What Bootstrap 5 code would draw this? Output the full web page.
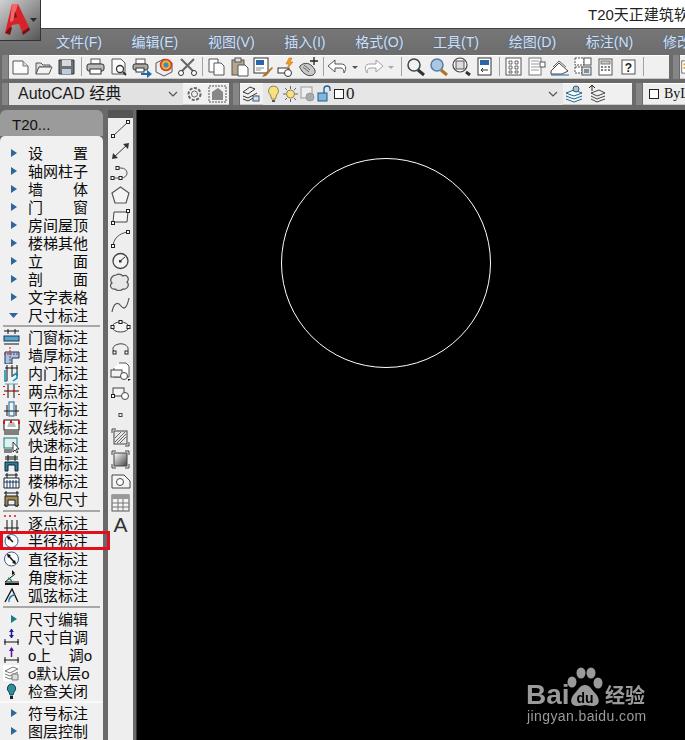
<!DOCTYPE html>
<html lang="zh">
<head>
<meta charset="utf-8">
<title>T20天正建筑软件</title>
<link href="https://cdn.jsdelivr.net/npm/bootstrap@5.3.0/dist/css/bootstrap.min.css" rel="stylesheet">
<style>
html,body{margin:0;height:740px;overflow:hidden;background:#696969}
body{font-family:"Liberation Sans","Noto Sans CJK SC",sans-serif;color:#111}
svg{display:block;flex:none}
.app{position:relative;width:685px;height:740px;overflow:hidden}
.logo-box{position:absolute;left:0;top:0;width:41px;height:41px;background:linear-gradient(140deg,#d2d2d2,#8c8c8c 55%,#565656);border-right:1px solid #333;border-bottom:1px solid #333}
.title-strip{height:29px;background:#fff;border-bottom:1px solid #444;padding-left:588px;font-size:15px;line-height:29px;white-space:nowrap;overflow:hidden;color:#222}
.menu-strip{height:26px;background:linear-gradient(#777,#6c6c6c);padding-left:56px;gap:29.7px;font-size:14px;line-height:26px;color:#d6dee9;white-space:nowrap;overflow:hidden;text-shadow:0 0 2px #3d6ea5}
.tool-row{background:#6b6b6b;white-space:nowrap;overflow:hidden}
.row-one{height:24px;padding-left:2px}
.row-two{height:22px;margin-top:4px;padding-left:2px}
.grip{width:6px;height:100%;flex:none;margin-right:1px;background-color:#868686;background-image:radial-gradient(#1d1d1d 45%,transparent 50%);background-size:2px 2px}
.tool-panel{background:#f0f0f0;height:100%;flex:none;box-shadow:inset 0 1px 0 #fff,inset 0 -1px 0 #c9c9c9}
.ti{width:23px;height:100%;flex:none}
.ti-n{width:13px;height:100%;flex:none}
.tsep{width:6px;height:100%;flex:none}
.tsep::after{content:"";display:block;width:1px;height:19px;margin:2px auto 0;background:#a3a3a3}
.combo{background:#e2e2e2;height:100%;font-size:16px;line-height:22px;color:#1a1a1a;flex:none}
.combo-style{width:174px;padding-left:9px}
.combo-layer{width:300px;padding-left:2px;background:#e6e6e6}
.zero{font-family:"Liberation Serif",serif;font-size:17px;margin-left:1px;line-height:22px}
.end-gap{width:23px;flex:none}
.bylayer{font-family:"Liberation Serif",serif;font-size:14px;line-height:22px;padding-left:5px;width:60px;background:#eee}
.main-zone{height:630px;margin-top:5px;background:#696969}
.palette{width:103px;flex:none}
.pal-head{height:26px;background:#9b9b9b;border-radius:6px 6px 0 0;padding-left:12px;font-size:15px;line-height:29px;position:relative;color:#111}
.head-grip{position:absolute;left:4px;top:7px;width:3px;height:9px;background-image:radial-gradient(#222 45%,transparent 50%);background-size:2px 2px}
.pal-body{background:#f0f0f0;border-radius:5px 5px 0 0;padding-top:8px;height:604px}
.pal-row{height:18px;padding-left:3px;font-size:15px;line-height:18px;color:#0c0c0c}
.pal-row .pi{width:17px;height:18px;flex:none;margin-right:8px}
.pal-label{width:60px;flex:none;white-space:nowrap;padding-top:1px}
.pal-wide{width:64px}
.pal-sep{height:2px;margin:1px 3px;background:#a8a8a8}
.pal-sep-w{margin:2px 3px}
.pal-sep-l{background:#fafafa;margin:1px 0}
.vbar{width:25px;flex:none;margin-left:5px;background:#eee;height:630px}
.vgrip{height:8px;padding:2px 4px;background:#555}
.vdots{height:4px;background-image:radial-gradient(#111 45%,transparent 50%);background-size:2px 2px}
.vi{height:22px}
.vbar-a{font-size:21px;line-height:22px;text-align:center;color:#333}
.canvas-view{position:relative;width:549px;margin-left:3px;height:630px;background:#000;flex:none;border-left:1px solid #333}
.circle-art{position:absolute;left:143px;top:47px}
.marker{position:absolute;left:0;top:531px;width:110px;height:19px;border:3px solid #e40f1c}
.wm{position:absolute;left:525px;top:680px;width:150px;color:#9a9a9a;filter:blur(.3px)}
.wm-bai{position:absolute;left:1px;top:0;font:700 28px/30px "Liberation Sans",sans-serif}
.wm-jing{position:absolute;left:80px;top:3px;font-size:20px;line-height:26px;font-weight:700;white-space:nowrap}
.wm-url{position:absolute;left:2px;top:27px;font:14px/18px "Liberation Sans",sans-serif;letter-spacing:.4px;white-space:nowrap}
.wm-paw{position:absolute;left:27px;top:-18px}
</style>
</head>
<body>
<svg width="0" height="0" style="position:absolute">
<defs>
<symbol id="arR" viewBox="0 0 17 18"><path d="M8 5l6 4-6 4z" fill="#2f659c"/></symbol>
<symbol id="arT" viewBox="0 0 17 18"><path d="M8 5l6 4-6 4z" fill="#128080"/></symbol>
<symbol id="arD" viewBox="0 0 17 18"><path d="M6 7h9l-4.500 5z" fill="#2f659c"/></symbol>
<symbol id="dimA" viewBox="0 0 17 18"><path d="M1 3h15M1 16h15" stroke="#111"/><path d="M5 1v5M12 1v5" stroke="#111"/><rect x="1" y="8" width="15" height="5" fill="#58a6c8" stroke="#16355c"/></symbol>
<symbol id="dimB" viewBox="0 0 17 18"><path d="M2 6h14v6H9v6H2z" fill="#9cc8ea" stroke="#16355c"/><path d="M7 1v16M1 8h15" stroke="#e01010" stroke-dasharray="2 1"/></symbol>
<symbol id="dimC" viewBox="0 0 17 18"><path d="M2 4h13M4 1v16M9 1v12M14 1v11" stroke="#111"/><path d="M2 6v11h2M9 12l5-3v5l-4 3" fill="none" stroke="#1487a8" stroke-width="1.500"/></symbol>
<symbol id="dimD" viewBox="0 0 17 18"><path d="M1 9h15M5 2v14M11 2v14" stroke="#111"/><path d="M1 4v1M16 4v1M1 12v1M16 12v1M5 8v2M11 8v2" stroke="#e01010" stroke-width="2"/><path d="M2 2h13" stroke="#58a6c8"/></symbol>
<symbol id="dimE" viewBox="0 0 17 18"><path d="M1 11h15M4 5v11M13 5v11" stroke="#111"/><rect x="6" y="2" width="5" height="14" fill="none" stroke="#1a5f92"/></symbol>
<symbol id="dimF" viewBox="0 0 17 18"><rect x="1" y="2" width="15" height="10" fill="#fff" stroke="#111"/><path d="M4 9l2-5h5l2 5z" fill="#bbb"/><path d="M1 3v3M16 3v3M8 2v3" stroke="#e01010" stroke-width="2"/><path d="M1 14h15M1 16h15" stroke="#111"/></symbol>
<symbol id="dimG" viewBox="0 0 17 18"><rect x="1" y="2" width="13" height="10" fill="#dff1ef" stroke="#127a72"/><path d="M10 6v10l2-2 2 3 1-1-2-3h3z" fill="#fff" stroke="#111" stroke-width=".8"/><path d="M1 14h8M1 16h8" stroke="#111"/></symbol>
<symbol id="dimH" viewBox="0 0 17 18"><path d="M2 3h13M5 1v6M12 1v6" stroke="#111"/><path d="M2 5h13" stroke="#111"/><path d="M2 17V8h13v9h-3v-6H5v6z" fill="#2c7f8c" stroke="#124"/></symbol>
<symbol id="dimI" viewBox="0 0 17 18"><path d="M2 3h13M4 1v5M13 1v5" stroke="#111"/><path d="M1 6h15v10H1z" fill="#fff" stroke="#123"/><path d="M4 8v8M7 8v8M10 8v8M13 8v8" stroke="#14355e"/><path d="M1 10h15" stroke="#14355e"/></symbol>
<symbol id="dimJ" viewBox="0 0 17 18"><path d="M1 3h15M3 1v16M14 1v16M1 15h15" stroke="#111"/><path d="M2 6h13v10h-3v-6H5v6H2z" fill="#a8894a" stroke="#123"/></symbol>
<symbol id="dimK" viewBox="0 0 17 18"><path d="M2 1v2M7 1v2M12 1v2" stroke="#e01010" stroke-width="1.500"/><path d="M1 14h15M4 6v11M9 6v11M14 6v11" stroke="#111"/></symbol>
<symbol id="cirA" viewBox="0 0 17 18"><circle cx="8.500" cy="9" r="6.500" fill="#fff" stroke="#2f5d8f"/><path d="M5 5l5 5" stroke="#111" stroke-width="1.500"/><path d="M4 4l4 1-3 3z" fill="#111"/></symbol>
<symbol id="cirB" viewBox="0 0 17 18"><circle cx="8.500" cy="9" r="7" fill="#fff" stroke="#2f5d8f"/><path d="M5 5l7 8" stroke="#111" stroke-width="1.500"/><path d="M4 4l4 1-3 3zM13 14l-4-1 3-3z" fill="#111"/></symbol>
<symbol id="angA" viewBox="0 0 17 18"><path d="M2 14L12 6M2 14h14" stroke="#111"/><path d="M2 16h14" stroke="#111" stroke-width="2"/><path d="M5 10a6 6 0 0 1 4 4" fill="none" stroke="#1a8a70" stroke-width="1.500"/><path d="M9 2l3 3-3 2z" fill="#111"/></symbol>
<symbol id="angB" viewBox="0 0 17 18"><path d="M2 16L9 3l6 13" fill="none" stroke="#111" stroke-width="1.300"/><path d="M6 16a6 6 0 0 1 6-7" fill="none" stroke="#1a73b0" stroke-width="1.500"/></symbol>
<symbol id="adjA" viewBox="0 0 17 18"><path d="M1 14h15M2 11v6M15 11v6" stroke="#111"/><path d="M8.500 1v9" stroke="#1c1c9c" stroke-width="1.500"/><path d="M6 4l2.500-3L11 4zM6 7l2.500 3L11 7z" fill="#1c1c9c"/></symbol>
<symbol id="adjB" viewBox="0 0 17 18"><path d="M1 14h15M2 11v6M15 11v6" stroke="#111"/><path d="M8.500 2v9" stroke="#5a0f9c" stroke-width="1.500"/><path d="M6 5l2.500-4L11 5z" fill="#5a0f9c"/></symbol>
<symbol id="layA" viewBox="0 0 17 18"><rect width="16" height="16" x="0" y="1" fill="#fff"/><path d="M2 7l8-4 5 2-8 4zM2 10l5 2 8-4M2 13l5 2 8-4" fill="none" stroke="#777"/><path d="M9 10h6v6H9z" fill="#ddd" stroke="#777"/></symbol>
<symbol id="bulbT" viewBox="0 0 17 18"><path d="M8.500 2a4.500 4.500 0 0 0-2.500 8l1 3h3l1-3a4.500 4.500 0 0 0-2.500-8z" fill="#2f8f92" stroke="#103f63"/><path d="M7 14h3v3H7z" fill="#123"/></symbol>
<symbol id="vLine" viewBox="0 0 25 22"><path d="M5 18L20 4" stroke="#444"/><rect x="3.500" y="16.500" width="3" height="3" fill="#fff" stroke="#222"/><rect x="18.500" y="2.500" width="3" height="3" fill="#fff" stroke="#222"/></symbol>
<symbol id="vLine2" viewBox="0 0 25 22"><path d="M5 18L20 4" stroke="#333"/><path d="M4 19l1-6 5 5zM21 3l-1 6-5-5z" fill="#333"/></symbol>
<symbol id="vPline" viewBox="0 0 25 22"><path d="M5 16h8c8 0 8-10 0-10H9" fill="none" stroke="#555"/><rect x="3" y="14.500" width="3" height="3" fill="#fff" stroke="#222"/><rect x="11" y="14.500" width="3" height="3" fill="#fff" stroke="#222"/><rect x="8" y="4.500" width="3" height="3" fill="#fff" stroke="#222"/></symbol>
<symbol id="vPoly" viewBox="0 0 25 22"><path d="M12.500 3L21 9l-3 10H7L4 9z" fill="#f4f4f4" stroke="#555" stroke-width="1.200"/></symbol>
<symbol id="vRect" viewBox="0 0 25 22"><path d="M6 6h14l-1 10H5z" fill="#f4f4f4" stroke="#444"/><rect x="18.500" y="3.500" width="3" height="3" fill="#fff" stroke="#222"/><rect x="3.500" y="15.500" width="3" height="3" fill="#fff" stroke="#222"/></symbol>
<symbol id="vArc" viewBox="0 0 25 22"><path d="M5 19C5 11 11 5 20 4" fill="none" stroke="#555"/><rect x="3.500" y="16.500" width="3" height="3" fill="#fff" stroke="#222"/><rect x="18.500" y="2.500" width="3" height="3" fill="#fff" stroke="#222"/></symbol>
<symbol id="vCir" viewBox="0 0 25 22"><circle cx="12.500" cy="11" r="7.500" fill="#f4f4f4" stroke="#444" stroke-width="1.300"/><path d="M12 11l5-4" stroke="#333"/><rect x="11" y="10" width="2.500" height="2.500" fill="#333"/></symbol>
<symbol id="vCloud" viewBox="0 0 25 22"><path d="M8 3c3-2 6 0 7 1 4-2 7 3 4 6 3 3 0 8-4 7-2 2-6 2-8 0-4 1-6-4-3-6-3-3 0-8 4-8z" fill="#e8e8e8" stroke="#555" stroke-width="1.200"/></symbol>
<symbol id="vSpl" viewBox="0 0 25 22"><path d="M4 18C6 8 10 8 13 12s6 2 8-8" fill="none" stroke="#555" stroke-width="1.200"/></symbol>
<symbol id="vEll" viewBox="0 0 25 22"><ellipse cx="12.500" cy="11" rx="8.500" ry="5" fill="#f4f4f4" stroke="#444"/><rect x="11" y="4.500" width="3" height="3" fill="#fff" stroke="#222"/><rect x="3" y="9.500" width="3" height="3" fill="#fff" stroke="#222"/><rect x="19" y="9.500" width="3" height="3" fill="#fff" stroke="#222"/></symbol>
<symbol id="vEllA" viewBox="0 0 25 22"><path d="M6 14C2 8 10 5 15 6s7 6 3 9" fill="none" stroke="#444"/><rect x="5" y="13" width="3" height="3" fill="#fff" stroke="#222"/><rect x="17" y="13" width="3" height="3" fill="#fff" stroke="#222"/></symbol>
<symbol id="vIns" viewBox="0 0 25 22"><path d="M11 3h7l3 3v11H6V8" fill="#fff" stroke="#555"/><rect x="3" y="10" width="11" height="7" fill="#f4f4f4" stroke="#444"/><circle cx="16" cy="16" r="3.500" fill="#fff" stroke="#444"/><path d="M20 19l3 0-3 2z" fill="#111"/></symbol>
<symbol id="vBlk" viewBox="0 0 25 22"><rect x="5" y="6" width="11" height="8" fill="#f4f4f4" stroke="#444"/><circle cx="17" cy="14" r="3.500" fill="#fff" stroke="#444"/><rect x="3.500" y="12.500" width="3" height="3" fill="#fff" stroke="#222"/></symbol>
<symbol id="vPt" viewBox="0 0 25 22"><rect x="11" y="9.500" width="3" height="3" fill="#fff" stroke="#444"/></symbol>
<symbol id="vHat" viewBox="0 0 25 22"><rect x="6" y="5" width="13" height="13" fill="#e8e8e8" stroke="#444"/><path d="M7 16L17 6M9 17L18 8M7 12l6-6M12 17l6-6" stroke="#666"/><path d="M4 7V3h4M21 16v4h-4" fill="none" stroke="#444"/></symbol>
<symbol id="vGrad" viewBox="0 0 25 22"><defs><linearGradient id="gr1" x1="0" y1="0" x2="1" y2="1"><stop offset="0" stop-color="#fff"/><stop offset="1" stop-color="#444"/></linearGradient></defs><rect x="6" y="5" width="13" height="13" fill="url(#gr1)" stroke="#444"/><path d="M4 7V3h4M21 7V3h-4M4 16v4h4M21 16v4h-4" fill="none" stroke="#444"/></symbol>
<symbol id="vBnd" viewBox="0 0 25 22"><path d="M4 5h12l6 6v7H4z" fill="#f4f4f4" stroke="#444"/><circle cx="12" cy="12" r="3.500" fill="#fff" stroke="#444"/></symbol>
<symbol id="vTab" viewBox="0 0 25 22"><rect x="4" y="3" width="17" height="16" fill="#f4f4f4" stroke="#555"/><path d="M4 3h17v4H4z" fill="#999"/><path d="M4 11h17M4 15h17M10 7v12M15 7v12" stroke="#777"/></symbol>
<symbol id="tNew" viewBox="0 0 23 24"><path d="M4 6h10l5 5v8H4z" fill="#fbfbfb" stroke="#555"/><path d="M14 6v5h5" fill="#ddd" stroke="#777"/></symbol>
<symbol id="tOpen" viewBox="0 0 23 24"><path d="M4 8h5l2 2h7v2H7l-3 7z" fill="#ddd" stroke="#555"/><path d="M7 12h13l-3 7H4z" fill="#f3f3f3" stroke="#555"/></symbol>
<symbol id="tSave" viewBox="0 0 23 24"><path d="M4 5h15v14H4z" fill="#6d7178" stroke="#33373e"/><rect x="7" y="5" width="9" height="6" fill="#d8d8d8"/><rect x="7" y="14" width="9" height="5" fill="#bcd"/></symbol>
<symbol id="tPrint" viewBox="0 0 23 24"><rect x="7" y="4" width="9" height="5" fill="#fff" stroke="#555"/><rect x="3" y="9" width="17" height="7" rx="2" fill="#bbb" stroke="#333"/><rect x="6" y="14" width="11" height="5" fill="#fff" stroke="#333"/></symbol>
<symbol id="tPrev" viewBox="0 0 23 24"><path d="M5 4h9l4 4v11H5z" fill="#fbfbfb" stroke="#555"/><circle cx="13" cy="14" r="3.500" fill="#fff" stroke="#333" stroke-width="1.300"/><path d="M16 17l3 3" stroke="#333" stroke-width="2"/></symbol>
<symbol id="tPub" viewBox="0 0 23 24"><rect x="6" y="4" width="9" height="5" fill="#fff" stroke="#555"/><rect x="3" y="9" width="15" height="6" rx="2" fill="#aaa" stroke="#333"/><rect x="6" y="13" width="8" height="4" fill="#fff" stroke="#333"/><path d="M11 18h6v-3l5 4-5 4v-3h-6z" fill="#1f68b3"/></symbol>
<symbol id="t3d" viewBox="0 0 23 24"><path d="M3 8l8-4 8 4v9l-8 4-8-4z" fill="#eee" stroke="#555"/><circle cx="13" cy="10" r="5.500" fill="#e7b23a" stroke="#d63a1e" stroke-width="1.500"/><circle cx="13" cy="10" r="2.500" fill="#3a8ac9"/></symbol>
<symbol id="tCut" viewBox="0 0 23 24"><path d="M5 4l13 13M18 4L5 17" stroke="#666" stroke-width="2"/><circle cx="5" cy="18" r="2.500" fill="#fff" stroke="#333"/><circle cx="18" cy="18" r="2.500" fill="#fff" stroke="#333"/></symbol>
<symbol id="tCopy" viewBox="0 0 23 24"><path d="M4 4h9v13H4z" fill="#fff" stroke="#555"/><path d="M9 8h7l3 3v9H9z" fill="#fff" stroke="#555"/></symbol>
<symbol id="tPaste" viewBox="0 0 23 24"><rect x="4" y="5" width="12" height="15" fill="#b5a78c" stroke="#555"/><rect x="7" y="3" width="6" height="4" fill="#ddd" stroke="#555"/><path d="M10 10h7l3 3v8H10z" fill="#fff" stroke="#555"/></symbol>
<symbol id="tMatch" viewBox="0 0 23 24"><rect x="3" y="3" width="14" height="15" fill="#fff" stroke="#333"/><rect x="5" y="5" width="8" height="5" fill="#2a65a8"/><path d="M5 13h8M5 15h5" stroke="#888"/><path d="M21 12l-8 7-2 3 4-1 7-8z" fill="#b07327"/></symbol>
<symbol id="tBlk" viewBox="0 0 23 24"><rect x="4" y="13" width="11" height="5" fill="#fff" stroke="#333"/><circle cx="14" cy="18" r="3.500" fill="#fff" stroke="#333"/><path d="M15 3l-3 6h3l-2 5 6-7h-3l2-4z" fill="#f0a020" stroke="#c06010" stroke-width=".5"/></symbol>
<symbol id="tHand" viewBox="0 0 23 24"><path d="M3 11c3-3 8-4 12 0s4 7 1 9c-4 2-9-1-11-4-1-2-3-3-2-5z" fill="#c8c8c8" stroke="#444"/><path d="M6 12l6 5M7 10l6 5" stroke="#666"/><path d="M17 2v8M13 6h8" stroke="#222" stroke-width="1.300"/></symbol>
<symbol id="tUndo" viewBox="0 0 23 24"><path d="M9 5L2 11l7 6v-4h6c2 0 3 2 3 5 3-5 2-9-3-9H9z" fill="#fff" stroke="#555"/></symbol>
<symbol id="tRedo" viewBox="0 0 23 24"><path d="M14 5l7 6-7 6v-4H8c-2 0-3 2-3 5-3-5-2-9 3-9h6z" fill="#fff" stroke="#a0a0a0"/></symbol>
<symbol id="tDrop" viewBox="0 0 13 24"><path d="M3 11h6l-3 3z" fill="#555"/></symbol>
<symbol id="tDropL" viewBox="0 0 13 24"><path d="M3 11h6l-3 3z" fill="#aaa"/></symbol>
<symbol id="tZ1" viewBox="0 0 23 24"><circle cx="10" cy="10" r="6" fill="#eef3f7" stroke="#444" stroke-width="1.500"/><path d="M14 15l6 5" stroke="#333" stroke-width="3"/></symbol>
<symbol id="tZ2" viewBox="0 0 23 24"><circle cx="10" cy="10" r="6" fill="#a9c8e6" stroke="#5a7ca0" stroke-width="1.500"/><path d="M14 15l6 5" stroke="#b07327" stroke-width="3"/></symbol>
<symbol id="tZ3" viewBox="0 0 23 24"><circle cx="10" cy="10" r="7" fill="#fff" stroke="#444" stroke-width="1.200"/><rect x="6" y="6" width="8" height="8" fill="#ddd" stroke="#555"/><path d="M16 17l4 3" stroke="#333" stroke-width="3"/></symbol>
<symbol id="tProp" viewBox="0 0 23 24"><rect x="5" y="3" width="13" height="17" fill="#fff" stroke="#333"/><rect x="7" y="5" width="9" height="5" fill="#2a65a8"/><path d="M8 15h7M8 15l2-2M8 15l2 2" stroke="#333"/></symbol>
<symbol id="tTool" viewBox="0 0 23 24"><rect x="4" y="3" width="15" height="17" fill="#fff" stroke="#555"/><path d="M7 6h3v3H7zM13 6h3v3h-3zM7 11h3v3H7zM13 11h3v3h-3zM7 16h3v2H7zM13 16h3v2h-3z" fill="#fff" stroke="#444" stroke-width=".8"/></symbol>
<symbol id="tDes" viewBox="0 0 23 24"><rect x="4" y="3" width="12" height="17" fill="#fff" stroke="#777"/><path d="M6 6h8M6 9h8M6 12h8M6 15h8" stroke="#999"/><rect x="15" y="7" width="5" height="5" fill="#fff" stroke="#555"/></symbol>
<symbol id="tSheet" viewBox="0 0 23 24"><path d="M3 16l8-8 9 8-6 3H3z" fill="#fff" stroke="#444"/><path d="M5 12l6-6 7 6" fill="none" stroke="#666"/><path d="M3 20h18" stroke="#2a65a8"/></symbol>
<symbol id="tMark" viewBox="0 0 23 24"><rect x="4" y="3" width="9" height="7" fill="#fff" stroke="#555" stroke-dasharray="2 1"/><rect x="13" y="3" width="7" height="7" fill="#fff" stroke="#555"/><rect x="4" y="12" width="7" height="6" fill="#fff" stroke="#555" stroke-dasharray="2 1"/><rect x="11" y="12" width="9" height="8" fill="#dde7f1" stroke="#555"/><path d="M13 15h5M13 17h5" stroke="#333"/></symbol>
<symbol id="tCalc" viewBox="0 0 23 24"><rect x="5" y="4" width="13" height="16" fill="#fff" stroke="#555"/><rect x="7" y="6" width="9" height="3" fill="#ccc" stroke="#777"/><path d="M7 12h2M10.500 12h2M14 12h2M7 15h2M10.500 15h2M14 15h2" stroke="#555" stroke-width="1.500"/></symbol>
<symbol id="tSett" viewBox="0 0 23 22"><circle cx="11.500" cy="11" r="6" fill="none" stroke="#666" stroke-width="2" stroke-dasharray="3 1.500"/><circle cx="11.500" cy="11" r="3" fill="#eee" stroke="#666"/></symbol>
<symbol id="tWs" viewBox="0 0 23 22"><rect x="3" y="3" width="17" height="16" fill="none" stroke="#555" stroke-dasharray="2 1"/><path d="M6 17V9l6-4 5 4v8z" fill="#888"/></symbol>
<symbol id="lLay" viewBox="0 0 23 22"><path d="M3 9l7-5 5 2-7 5zM3 13l5 2 9-5M3 16l5 2 9-5" fill="none" stroke="#333"/><rect x="13" y="13" width="6" height="5" fill="#cfe0ef" stroke="#456"/></symbol>
<symbol id="lBulb" viewBox="0 0 17 22"><path d="M8.500 3a5 5 0 0 0-3 9l1 4h4l1-4a5 5 0 0 0-3-9z" fill="#f9e27d" stroke="#8d8155"/><path d="M7 17h3v2H7z" fill="#555"/></symbol>
<symbol id="lSun" viewBox="0 0 17 22"><circle cx="8.500" cy="11" r="4" fill="#f9e27d" stroke="#8d8155"/><path d="M8.500 3v3M8.500 16v3M1 11h3M13 11h3M3 5l2 2M12 15l2 2M14 5l-2 2M5 15l-2 2" stroke="#666"/></symbol>
<symbol id="lFrz" viewBox="0 0 17 22"><rect x="2" y="4" width="11" height="11" fill="#eee" stroke="#999"/><circle cx="11" cy="14" r="4" fill="#aaa" stroke="#999"/></symbol>
<symbol id="lLock" viewBox="0 0 17 22"><rect x="2" y="10" width="9" height="8" fill="#7fb6dc" stroke="#1e5c90"/><path d="M8 10V6a3 3 0 0 1 6 0v2" fill="none" stroke="#1e5c90" stroke-width="1.300"/></symbol>
<symbol id="lSq" viewBox="0 0 12 22"><rect x="1.500" y="6.500" width="9" height="9" fill="#fff" stroke="#222"/></symbol>
<symbol id="lChev" viewBox="0 0 12 22"><path d="M2 9l4 4 4-4" fill="none" stroke="#555" stroke-width="1.200"/></symbol>
<symbol id="lL2" viewBox="0 0 23 22"><path d="M3 10l8-3 8 3-8 3zM3 13l8 3 8-3M3 16l8 3 8-3" fill="#fff" stroke="#16688f"/><circle cx="13" cy="6" r="3" fill="#9fc4e0" stroke="#456"/></symbol>
<symbol id="lL3" viewBox="0 0 23 22"><path d="M5 10l8-3 6 3-8 3zM5 13l6 3 8-3M5 16l6 3 8-3" fill="none" stroke="#444"/><path d="M6 2v6M3 5l3-3 3 3" fill="none" stroke="#222"/></symbol>
<symbol id="tExtra" viewBox="0 0 23 24"><rect x="2" y="5" width="9" height="14" fill="#fff" stroke="#666"/><path d="M4 9h5M4 13h5" stroke="#d9951f" stroke-width="2"/></symbol>
</defs>
</svg>

<div class="app">
  <div class="title-strip">T20天正建筑软</div>
  <div class="menu-strip d-flex">
    <span>文件(F)</span><span>编辑(E)</span><span>视图(V)</span><span>插入(I)</span><span>格式(O)</span><span>工具(T)</span><span>绘图(D)</span><span>标注(N)</span><span>修改</span>
  </div>

  <div class="tool-row row-one d-flex">
    <div class="grip"></div>
    <div class="tool-panel d-flex">
      <svg class="ti"><use href="#tNew"/></svg><svg class="ti"><use href="#tOpen"/></svg><svg class="ti"><use href="#tSave"/></svg><div class="tsep"></div>
      <svg class="ti"><use href="#tPrint"/></svg><svg class="ti"><use href="#tPrev"/></svg><svg class="ti"><use href="#tPub"/></svg><svg class="ti"><use href="#t3d"/></svg><svg class="ti"><use href="#tCut"/></svg><div class="tsep"></div>
      <svg class="ti"><use href="#tCopy"/></svg><svg class="ti"><use href="#tPaste"/></svg><svg class="ti"><use href="#tMatch"/></svg><svg class="ti"><use href="#tBlk"/></svg><svg class="ti"><use href="#tHand"/></svg><div class="tsep"></div>
      <svg class="ti"><use href="#tUndo"/></svg><svg class="ti-n"><use href="#tDrop"/></svg><svg class="ti"><use href="#tRedo"/></svg><svg class="ti-n"><use href="#tDropL"/></svg><div class="tsep"></div>
      <svg class="ti"><use href="#tZ1"/></svg><svg class="ti"><use href="#tZ2"/></svg><svg class="ti"><use href="#tZ3"/></svg><svg class="ti"><use href="#tProp"/></svg><div class="tsep"></div>
      <svg class="ti"><use href="#tTool"/></svg><svg class="ti"><use href="#tDes"/></svg><svg class="ti"><use href="#tSheet"/></svg><svg class="ti"><use href="#tMark"/></svg><svg class="ti"><use href="#tCalc"/></svg>
      <svg class="ti" viewBox="0 0 23 24"><rect x="5" y="5" width="13" height="14" fill="#fff" stroke="#555"/><text x="11.500" y="17" font-size="12" font-weight="700" text-anchor="middle" font-family="Liberation Sans" fill="#222">?</text></svg>
      <div class="tsep"></div><div class="ti"></div>
    </div>
    <div class="grip ms-1"></div>
    <div class="tool-panel" style="width:20px"><svg width="20" height="24"><use href="#tExtra"/></svg></div>
  </div>

  <div class="tool-row row-two d-flex">
    <div class="grip"></div>
    <div class="tool-panel d-flex">
      <div class="combo combo-style d-flex align-items-center justify-content-between pe-1"><span>AutoCAD 经典</span><svg width="12" height="22"><use href="#lChev"/></svg></div>
      <svg class="ti"><use href="#tSett"/></svg><svg class="ti"><use href="#tWs"/></svg>
    </div>
    <div class="grip ms-1"></div>
    <div class="tool-panel d-flex">
      <svg class="ti"><use href="#lLay"/></svg>
      <div class="combo combo-layer d-flex align-items-center">
        <svg width="17" height="22"><use href="#lBulb"/></svg><svg width="17" height="22"><use href="#lSun"/></svg><svg width="17" height="22"><use href="#lFrz"/></svg><svg width="17" height="22"><use href="#lLock"/></svg><svg width="12" height="22"><use href="#lSq"/></svg>
        <span class="zero">0</span>
        <svg class="ms-auto me-1" width="12" height="22"><use href="#lChev"/></svg>
      </div>
      <svg class="ti"><use href="#lL2"/></svg><svg class="ti"><use href="#lL3"/></svg><div class="end-gap"></div>
    </div>
    <div class="grip ms-1"></div>
    <div class="tool-panel bylayer d-flex align-items-center"><svg width="12" height="22"><use href="#lSq"/></svg><span class="ms-1">ByL</span></div>
  </div>

  <div class="main-zone d-flex">
    <div class="palette">
      <div class="pal-head"><span class="head-grip"></span>T20...</div>
      <div class="pal-body">
        <div class="pal-row d-flex"><svg class="pi"><use href="#arR"/></svg><span class="pal-label d-flex justify-content-between"><span>设</span><span>置</span></span></div>
        <div class="pal-row d-flex"><svg class="pi"><use href="#arR"/></svg><span class="pal-label">轴网柱子</span></div>
        <div class="pal-row d-flex"><svg class="pi"><use href="#arR"/></svg><span class="pal-label d-flex justify-content-between"><span>墙</span><span>体</span></span></div>
        <div class="pal-row d-flex"><svg class="pi"><use href="#arR"/></svg><span class="pal-label d-flex justify-content-between"><span>门</span><span>窗</span></span></div>
        <div class="pal-row d-flex"><svg class="pi"><use href="#arR"/></svg><span class="pal-label">房间屋顶</span></div>
        <div class="pal-row d-flex"><svg class="pi"><use href="#arR"/></svg><span class="pal-label">楼梯其他</span></div>
        <div class="pal-row d-flex"><svg class="pi"><use href="#arR"/></svg><span class="pal-label d-flex justify-content-between"><span>立</span><span>面</span></span></div>
        <div class="pal-row d-flex"><svg class="pi"><use href="#arR"/></svg><span class="pal-label d-flex justify-content-between"><span>剖</span><span>面</span></span></div>
        <div class="pal-row d-flex"><svg class="pi"><use href="#arR"/></svg><span class="pal-label">文字表格</span></div>
        <div class="pal-row d-flex"><svg class="pi"><use href="#arD"/></svg><span class="pal-label">尺寸标注</span></div>
        <div class="pal-sep"></div>
        <div class="pal-row d-flex"><svg class="pi"><use href="#dimA"/></svg><span class="pal-label">门窗标注</span></div>
        <div class="pal-row d-flex"><svg class="pi"><use href="#dimB"/></svg><span class="pal-label">墙厚标注</span></div>
        <div class="pal-row d-flex"><svg class="pi"><use href="#dimC"/></svg><span class="pal-label">内门标注</span></div>
        <div class="pal-row d-flex"><svg class="pi"><use href="#dimD"/></svg><span class="pal-label">两点标注</span></div>
        <div class="pal-row d-flex"><svg class="pi"><use href="#dimE"/></svg><span class="pal-label">平行标注</span></div>
        <div class="pal-row d-flex"><svg class="pi"><use href="#dimF"/></svg><span class="pal-label">双线标注</span></div>
        <div class="pal-row d-flex"><svg class="pi"><use href="#dimG"/></svg><span class="pal-label">快速标注</span></div>
        <div class="pal-row d-flex"><svg class="pi"><use href="#dimH"/></svg><span class="pal-label">自由标注</span></div>
        <div class="pal-row d-flex"><svg class="pi"><use href="#dimI"/></svg><span class="pal-label">楼梯标注</span></div>
        <div class="pal-row d-flex"><svg class="pi"><use href="#dimJ"/></svg><span class="pal-label">外包尺寸</span></div>
        <div class="pal-sep pal-sep-w"></div>
        <div class="pal-row d-flex"><svg class="pi"><use href="#dimK"/></svg><span class="pal-label">逐点标注</span></div>
        <div class="pal-row d-flex"><svg class="pi"><use href="#cirA"/></svg><span class="pal-label">半径标注</span></div>
        <div class="pal-row d-flex"><svg class="pi"><use href="#cirB"/></svg><span class="pal-label">直径标注</span></div>
        <div class="pal-row d-flex"><svg class="pi"><use href="#angA"/></svg><span class="pal-label">角度标注</span></div>
        <div class="pal-row d-flex"><svg class="pi"><use href="#angB"/></svg><span class="pal-label">弧弦标注</span></div>
        <div class="pal-sep pal-sep-w"></div>
        <div class="pal-row d-flex"><svg class="pi"><use href="#arT"/></svg><span class="pal-label">尺寸编辑</span></div>
        <div class="pal-row d-flex"><svg class="pi"><use href="#adjA"/></svg><span class="pal-label">尺寸自调</span></div>
        <div class="pal-row d-flex"><svg class="pi"><use href="#adjB"/></svg><span class="pal-label pal-wide d-flex justify-content-between"><span>o上</span><span>调o</span></span></div>
        <div class="pal-row d-flex"><svg class="pi"><use href="#layA"/></svg><span class="pal-label pal-wide">o默认层o</span></div>
        <div class="pal-row d-flex"><svg class="pi"><use href="#bulbT"/></svg><span class="pal-label">检查关闭</span></div>
        <div class="pal-sep pal-sep-l"></div>
        <div class="pal-row d-flex"><svg class="pi"><use href="#arR"/></svg><span class="pal-label">符号标注</span></div>
        <div class="pal-row d-flex"><svg class="pi"><use href="#arR"/></svg><span class="pal-label">图层控制</span></div>
      </div>
    </div>

    <div class="vbar">
      <div class="vgrip"><div class="vdots"></div></div>
      <svg class="vi" width="25"><use href="#vLine"/></svg><svg class="vi" width="25"><use href="#vLine2"/></svg><svg class="vi" width="25"><use href="#vPline"/></svg><svg class="vi" width="25"><use href="#vPoly"/></svg><svg class="vi" width="25"><use href="#vRect"/></svg><svg class="vi" width="25"><use href="#vArc"/></svg><svg class="vi" width="25"><use href="#vCir"/></svg><svg class="vi" width="25"><use href="#vCloud"/></svg><svg class="vi" width="25"><use href="#vSpl"/></svg><svg class="vi" width="25"><use href="#vEll"/></svg><svg class="vi" width="25"><use href="#vEllA"/></svg><svg class="vi" width="25"><use href="#vIns"/></svg><svg class="vi" width="25"><use href="#vBlk"/></svg><svg class="vi" width="25"><use href="#vPt"/></svg><svg class="vi" width="25"><use href="#vHat"/></svg><svg class="vi" width="25"><use href="#vGrad"/></svg><svg class="vi" width="25"><use href="#vBnd"/></svg><svg class="vi" width="25"><use href="#vTab"/></svg>
      <div class="vi vbar-a">A</div>
    </div>

    <div class="canvas-view">
      <svg class="circle-art" width="212" height="212"><circle cx="106" cy="106" r="104.500" fill="none" stroke="#fff" stroke-width="1"/></svg>
    </div>
  </div>

  <div class="logo-box">
    <svg width="40" height="40" viewBox="0 0 40 40"><path d="M5 33l7-29h6l11 23-7 5-3-8-7 1-2 8z" fill="#d8232a"/><path d="M12 4h6l-5 17-3 1z" fill="#f2666a"/><path d="M14 18l3-1-2-6z" fill="#7d1116"/><path d="M5 33l5 2 2-7-2-1zM22 32l7-5 1 3-7 5z" fill="#7b1014"/><path d="M30 18h7l-3.500 4z" fill="#2b2b2b"/></svg>
  </div>
  <div class="marker"></div>

  <div class="wm">
    <svg class="wm-paw" width="72" height="62" viewBox="0 0 72 62"><ellipse cx="20" cy="20" rx="4.500" ry="5.500" fill="#9a9a9a"/><ellipse cx="29" cy="11" rx="4.500" ry="5.500" fill="#9a9a9a"/><ellipse cx="39" cy="11" rx="4.500" ry="5.500" fill="#9a9a9a"/><ellipse cx="46" cy="21" rx="4.500" ry="5.500" fill="#9a9a9a"/><path d="M33 23c5 0 6 4 10 8 5 5 6 13-3 13-3 0-5-1-7-1s-4 1-7 1c-9 0-8-8-3-13 4-4 5-8 10-8z" fill="#9a9a9a"/><text x="33" y="41" font-family="Liberation Sans" font-weight="700" font-size="14" text-anchor="middle" fill="#000">du</text></svg>
    <span class="wm-bai">Bai</span>
    <span class="wm-jing">经验</span>
    <span class="wm-url">jingyan.baidu.com</span>
  </div>
</div>
<script src="https://cdn.jsdelivr.net/npm/bootstrap@5.3.0/dist/js/bootstrap.bundle.min.js"></script>
</body>
</html>
